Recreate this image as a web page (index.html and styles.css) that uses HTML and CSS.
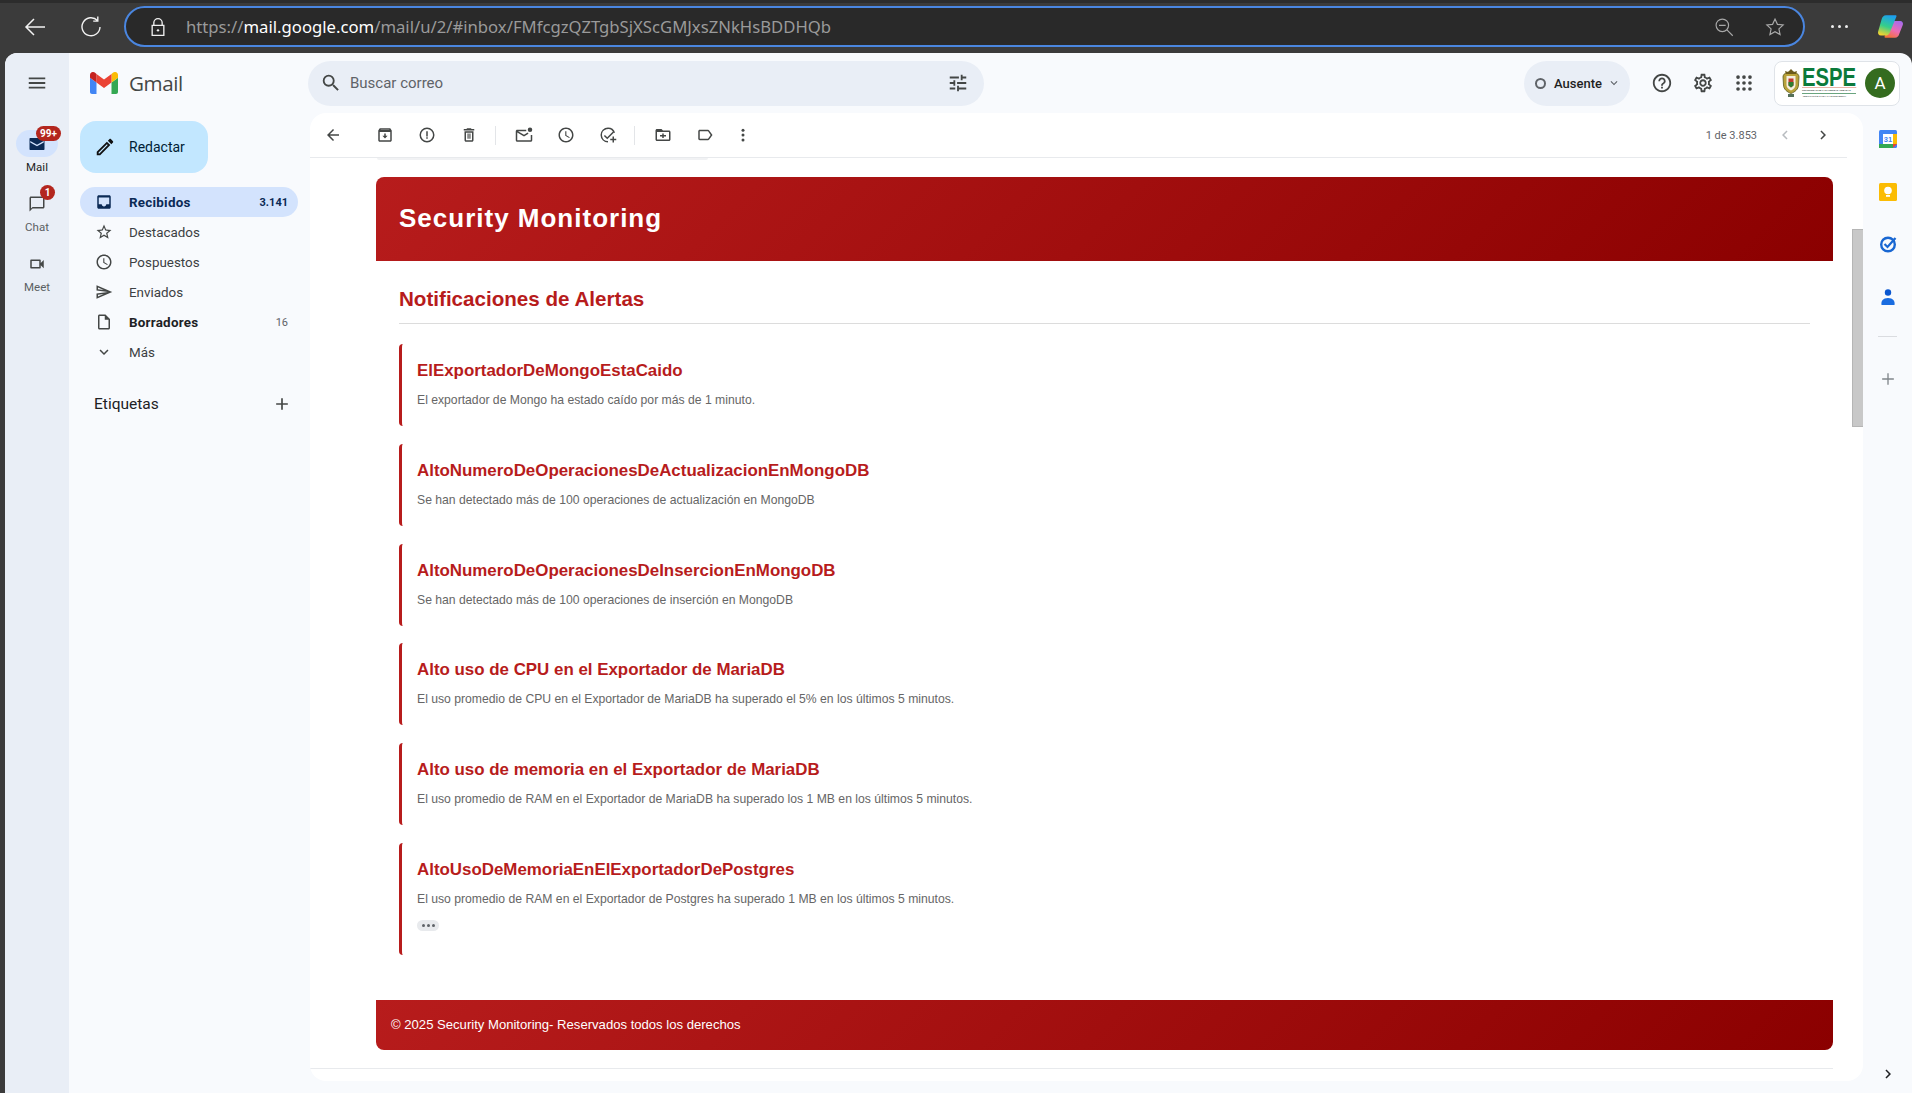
FILE: index.html
```html
<!DOCTYPE html>
<html lang="es">
<head>
  <meta charset="UTF-8">
  <meta name="viewport" content="width=device-width, initial-scale=1.0">
  <title>Security Monitoring - Gmail</title>
  <link rel="stylesheet" href="styles.css">
</head>
<body>
  <!-- browser chrome -->
  <div class="browser-bar">
    <svg class="chrome-icon back" viewBox="0 0 24 24"><path d="M22 12H3M11 4l-8 8 8 8" fill="none" stroke="#f2f2f2" stroke-width="1.5"/></svg>
    <svg class="chrome-icon reload" viewBox="0 0 24 24"><path d="M18.5 5.5A9 9 0 1 0 21 12M18.8 1.5v4.6h-4.6" fill="none" stroke="#f2f2f2" stroke-width="1.4"/></svg>
    <div class="url-pill">
      <svg class="lock" viewBox="0 0 24 24"><path d="M7 10V7a5 5 0 0 1 10 0v3M5 10h14v12H5z" fill="none" stroke="#f0f0f0" stroke-width="1.6"/><circle cx="12" cy="16" r="1.4" fill="#f0f0f0"/></svg>
      <div class="url-text">https://<b>mail.google.com</b>/mail/u/2/#inbox/FMfcgzQZTgbSjXScGMJxsZNkHsBDDHQb</div>
      <svg class="pill-icon zoom-out" viewBox="0 0 24 24"><circle cx="10" cy="10" r="7.5" fill="none" stroke="#a8a8a8" stroke-width="1.4"/><path d="M6 10h8M15.5 15.5l7 7" stroke="#a8a8a8" stroke-width="1.4"/></svg>
      <svg class="pill-icon" viewBox="0 0 24 24"><path d="M12 2.5l2.9 6.3 6.9.8-5.1 4.7 1.4 6.8-6.100-3.400-6.100 3.400 1.400-6.800-5.100-4.700 6.900-.8z" fill="none" stroke="#a8a8a8" stroke-width="1.4"/></svg>
    </div>
    <div class="chrome-dots"><i></i><i></i><i></i></div>
    <svg class="copilot" viewBox="0 0 24 24">
      <defs>
        <linearGradient id="cp1" x1="0.6" y1="0" x2="0.3" y2="1"><stop offset="0" stop-color="#1c9fee"/><stop offset=".55" stop-color="#35cf8a"/><stop offset="1" stop-color="#f4d22f"/></linearGradient>
        <linearGradient id="cp2" x1="0.8" y1="0" x2="0.3" y2="1"><stop offset="0" stop-color="#a56bee"/><stop offset=".55" stop-color="#ec6cb4"/><stop offset="1" stop-color="#f4703a"/></linearGradient>
      </defs>
      <path d="M15 7h5.500c2 0 3 1.500 2.500 3.500L20 18c-.6 2.500-2 4-4 4H7.500c-.8 0-1-.6-.7-1.300L12.500 10c.5-1.800 1-3 2.500-3z" fill="url(#cp2)"/>
      <path d="M8 2h8.500c.8 0 1 .6.7 1.300L11.500 17c-.7 1.800-2 3-4 3H3.500C1.500 20 .5 18.500 1 16.500L4 6c.6-2.500 2-4 4-4z" fill="url(#cp1)"/>
    </svg>
  </div>

  <div class="gmail">
    <!-- rail -->
    <nav class="rail">
      <div class="rail-menu">
        <svg class="icon" viewBox="0 0 24 24"><path d="M3 18h18v-2H3v2zm0-5h18v-2H3v2zm0-7v2h18V6H3z"/></svg>
      </div>
      <div class="rail-item active">
        <div class="rail-pill">
          <svg class="icon-sm navy" viewBox="0 0 24 24"><path d="M3 4h18c.6 0 1 .4 1 1v14c0 .6-.4 1-1 1H3c-.6 0-1-.4-1-1V5c0-.6.4-1 1-1zm0 4v2l9 5 9-5V8l-9 5z"/></svg>
          <span class="badge badge-wide">99+</span>
        </div>
        <span>Mail</span>
      </div>
      <div class="rail-item">
        <div class="rail-pill">
          <svg class="icon-sm" viewBox="0 0 24 24"><path d="M20 2H4c-1.100 0-2 .9-2 2v18l4-4h14c1.100 0 2-.9 2-2V4c0-1.100-.9-2-2-2zm0 14H6l-2 2V4h16v12z"/></svg>
          <span class="badge badge-round">1</span>
        </div>
        <span>Chat</span>
      </div>
      <div class="rail-item">
        <div class="rail-pill">
          <svg class="icon-sm" viewBox="0 0 24 24"><path d="M15 8v8H5V8h10m1-2H4c-.55 0-1 .45-1 1v10c0 .55.45 1 1 1h12c.55 0 1-.45 1-1v-3.500l4 4v-11l-4 4V7c0-.55-.45-1-1-1z"/></svg>
        </div>
        <span>Meet</span>
      </div>
    </nav>

    <div class="workspace">
      <!-- top header -->
      <header class="topbar">
        <div class="brand">
          <svg class="gmail-logo" viewBox="0 0 28 22">
            <path d="M2 22h4.500V10.500L0 5.700V20c0 1.100.9 2 2 2z" fill="#4285f4"/>
            <path d="M21.500 22H26c1.100 0 2-.9 2-2V5.700l-6.500 4.800z" fill="#34a853"/>
            <path d="M21.500 2v8.500L28 5.700V3c0-2.500-2.800-3.900-4.800-2.400z" fill="#fbbc04"/>
            <path d="M6.500 10.500V2L14 7.600 21.500 2v8.500L14 16z" fill="#ea4335"/>
            <path d="M0 3v2.700l6.500 4.800V2L4.800.6C2.800-.9 0 .5 0 3z" fill="#c5221f"/>
          </svg>
          <span class="brand-name">Gmail</span>
        </div>
        <div class="search">
          <svg class="icon" viewBox="0 0 24 24"><path d="M15.500 14h-.79l-.28-.27A6.471 6.471 0 0 0 16 9.500 6.500 6.500 0 1 0 9.500 16c1.610 0 3.090-.59 4.230-1.570l.27.28v.79l5 4.990L20.490 19l-4.990-5zm-6 0C7.010 14 5 11.990 5 9.500S7.010 5 9.500 5 14 7.010 14 9.500 11.990 14 9.500 14z"/></svg>
          <span class="search-text">Buscar correo</span>
          <svg class="icon" viewBox="0 0 24 24"><path d="M3 17v2h6v-2H3zM3 5v2h10V5H3zm10 16v-2h8v-2h-8v-2h-2v6h2zM7 9v2H3v2h4v2h2V9H7zm14 4v-2H11v2h10zm-6-4h2V7h4V5h-4V3h-2v6z"/></svg>
        </div>
        <div class="status">
          <i class="status-dot"></i>
          <span>Ausente</span>
          <svg class="status-caret" viewBox="0 0 24 24"><path d="M16.590 8.590L12 13.170 7.410 8.590 6 10l6 6 6-6z"/></svg>
        </div>
        <div class="top-icons">
          <svg class="icon" viewBox="0 0 24 24"><path d="M11 18h2v-2h-2v2zm1-16C6.480 2 2 6.480 2 12s4.480 10 10 10 10-4.480 10-10S17.520 2 12 2zm0 18c-4.410 0-8-3.590-8-8s3.590-8 8-8 8 3.590 8 8-3.590 8-8 8zm0-14c-2.210 0-4 1.790-4 4h2c0-1.100.9-2 2-2s2 .9 2 2c0 2-3 1.750-3 5h2c0-2.250 3-2.500 3-5 0-2.210-1.790-4-4-4z"/></svg>
          <svg class="icon" viewBox="0 0 24 24"><path d="M19.430 12.980c.04-.32.07-.64.07-.98 0-.34-.03-.66-.07-.98l2.110-1.650c.19-.15.24-.42.12-.64l-2-3.460c-.09-.16-.26-.25-.44-.25-.06 0-.12.01-.17.03l-2.490 1c-.52-.4-1.080-.73-1.690-.98l-.38-2.650C14.460 2.180 14.250 2 14 2h-4c-.25 0-.46.18-.49.42l-.38 2.650c-.61.25-1.170.59-1.690.98l-2.490-1c-.06-.02-.12-.03-.18-.03-.17 0-.34.09-.43.25l-2 3.460c-.13.22-.07.49.12.64l2.110 1.650c-.04.32-.07.65-.07.98 0 .33.03.66.07.98l-2.110 1.650c-.19.15-.24.42-.12.64l2 3.460c.09.16.26.25.44.25.06 0 .12-.01.17-.03l2.490-1c.52.4 1.080.73 1.690.98l.38 2.650c.03.24.24.42.49.42h4c.25 0 .46-.18.49-.42l.38-2.650c.61-.25 1.170-.59 1.690-.98l2.490 1c.06.02.12.03.18.03.17 0 .34-.09.43-.25l2-3.460c.12-.22.07-.49-.12-.64l-2.110-1.650zm-1.980-1.710c.04.31.05.52.05.73 0 .21-.02.43-.05.73l-.14 1.130.89.7 1.080.84-.7 1.210-1.270-.51-1.040-.42-.9.68c-.43.32-.84.56-1.250.73l-1.060.43-.16 1.130-.2 1.350h-1.400l-.19-1.350-.16-1.130-1.060-.43c-.43-.18-.83-.41-1.230-.71l-.91-.7-1.060.43-1.270.51-.7-1.210 1.080-.84.89-.7-.14-1.130c-.03-.31-.05-.54-.05-.74s.02-.43.05-.73l.14-1.130-.89-.7-1.080-.84.7-1.210 1.270.51 1.040.42.9-.68c.43-.32.84-.56 1.250-.73l1.060-.43.16-1.130.2-1.350h1.390l.19 1.350.16 1.130 1.060.43c.43.18.83.41 1.230.71l.91.7 1.060-.43 1.270-.51.7 1.210-1.070.85-.89.7.14 1.130zM12 8c-2.210 0-4 1.790-4 4s1.790 4 4 4 4-1.790 4-4-1.790-4-4-4zm0 6c-1.100 0-2-.9-2-2s.9-2 2-2 2 .9 2 2-.9 2-2 2z"/></svg>
          <svg class="icon" viewBox="0 0 24 24"><circle cx="5.500" cy="5.500" r="2"/><circle cx="12" cy="5.500" r="2"/><circle cx="18.500" cy="5.500" r="2"/><circle cx="5.500" cy="12" r="2"/><circle cx="12" cy="12" r="2"/><circle cx="18.500" cy="12" r="2"/><circle cx="5.500" cy="18.500" r="2"/><circle cx="12" cy="18.500" r="2"/><circle cx="18.500" cy="18.500" r="2"/></svg>
        </div>
        <div class="account">
          <svg class="crest" viewBox="0 0 18 30">
            <path d="M1 9c0-3 3-5 8-5s8 2 8 5l-.5 8c0 4-3.500 7-7.500 8.500C5 24 1.500 21 1.500 17z" fill="#b9a23a" stroke="#5b5a1e" stroke-width=".8"/>
            <path d="M4.500 8h9v9c0 2.500-2 4.500-4.500 5.500C6.500 21.500 4.500 19.500 4.500 17z" fill="#f4efe0"/>
            <path d="M6.500 10.500h5v7l-2.500 2-2.500-2z" fill="#c0392b"/>
            <path d="M6.500 14h5v3.500l-2.500 2-2.500-2z" fill="#2e7d32"/>
            <path d="M3 3l3 1 3-3 3 3 3-1-1 3H4z" fill="#6b5a1a"/>
            <path d="M6 26h6v3H6z" fill="#55705a"/>
          </svg>
          <div class="espe">
            <div class="espe-name">ESPE</div>
            <div class="espe-line">UNIVERSIDAD DE LAS FUERZAS ARMADAS</div>
            <div class="espe-line espe-motto">INNOVACIÓN PARA LA EXCELENCIA</div>
          </div>
          <div class="avatar">A</div>
        </div>
      </header>

      <div class="content-row">
        <!-- sidebar -->
        <aside class="sidebar">
          <div class="compose">
            <svg class="icon compose-icon" viewBox="0 0 24 24"><path d="M3 17.250V21h3.750L17.810 9.940l-3.750-3.750L3 17.250zM5.920 19H5v-.92l9.060-9.060.92.92L5.920 19zM20.710 5.630l-2.340-2.340c-.39-.39-1.020-.39-1.410 0l-1.830 1.830 3.750 3.750 1.830-1.830c.39-.39.39-1.020 0-1.410z"/></svg>
            <span>Redactar</span>
          </div>
          <ul class="nav">
            <li class="nav-row selected">
              <svg class="icon-sm navy" viewBox="0 0 24 24"><path d="M5 3h14c1.100 0 2 .9 2 2v14c0 1.100-.9 2-2 2H5c-1.100 0-2-.9-2-2V5c0-1.100.9-2 2-2zm0 12h4c0 1.660 1.350 3 3 3s3-1.340 3-3h4V6H5z"/></svg>
              <span class="nav-label">Recibidos</span><span class="nav-count">3.141</span>
            </li>
            <li class="nav-row">
              <svg class="icon-sm" viewBox="0 0 24 24"><path d="M22 9.240l-7.190-.62L12 2 9.190 8.630 2 9.240l5.460 4.730L5.820 21 12 17.270 18.180 21l-1.630-7.030L22 9.240zM12 15.400l-3.760 2.270 1-4.280-3.320-2.880 4.380-.38L12 6.100l1.710 4.040 4.380.38-3.320 2.880 1 4.280L12 15.400z"/></svg>
              <span class="nav-label">Destacados</span>
            </li>
            <li class="nav-row">
              <svg class="icon-sm" viewBox="0 0 24 24"><path d="M11.990 2C6.470 2 2 6.480 2 12s4.470 10 9.990 10C17.520 22 22 17.520 22 12S17.520 2 11.990 2zM12 20c-4.420 0-8-3.580-8-8s3.580-8 8-8 8 3.580 8 8-3.580 8-8 8zm.5-13H11v6l5.250 3.150.75-1.230-4.500-2.670z"/></svg>
              <span class="nav-label">Pospuestos</span>
            </li>
            <li class="nav-row">
              <svg class="icon-sm" viewBox="0 0 24 24"><path d="M4.010 6.030l7.510 3.220-7.520-1 .01-2.220m7.500 8.720L4 17.970v-2.220l7.510-1M2.010 3L2 10l15 2-15 2 .01 7L23 12 2.010 3z"/></svg>
              <span class="nav-label">Enviados</span>
            </li>
            <li class="nav-row strong">
              <svg class="icon-sm" viewBox="0 0 24 24"><path d="M14 2H6c-1.100 0-2 .9-2 2v16c0 1.100.9 2 2 2h12c1.100 0 2-.9 2-2V8l-6-6zM6 20V4h7v5h5v11H6z"/></svg>
              <span class="nav-label">Borradores</span><span class="nav-count light">16</span>
            </li>
            <li class="nav-row">
              <svg class="icon-sm" viewBox="0 0 24 24"><path d="M16.590 8.590L12 13.170 7.410 8.590 6 10l6 6 6-6z"/></svg>
              <span class="nav-label">Más</span>
            </li>
          </ul>
          <div class="labels-head">
            <span>Etiquetas</span>
            <svg class="icon" viewBox="0 0 24 24"><path d="M19 13h-6v6h-2v-6H5v-2h6V5h2v6h6v2z"/></svg>
          </div>
        </aside>

        <!-- mail panel -->
        <main class="panel">
          <div class="mail-toolbar">
            <svg class="tool first" viewBox="0 0 24 24"><path d="M20 11H7.830l5.590-5.590L12 4l-8 8 8 8 1.410-1.410L7.830 13H20v-2z"/></svg>
            <div class="tool-group">
              <svg class="tool" viewBox="0 0 24 24"><path d="M5 3h14l2 3v13c0 1.100-.9 2-2 2H5c-1.100 0-2-.9-2-2V6zm0 5v11h14V8zm1-3h12l-.5-.5H6.500zM11 10h2v3h2.500L12 16.800 8.500 13H11z"/></svg>
              <svg class="tool" viewBox="0 0 24 24"><path d="M12 2a10 10 0 1 0 0 20 10 10 0 0 0 0-20zm0 18a8 8 0 1 1 0-16 8 8 0 0 1 0 16zm-1-13h2v7h-2zm0 8h2v2h-2z"/></svg>
              <svg class="tool" viewBox="0 0 24 24"><path d="M16 9v10H8V9h8m-1.500-6h-5l-1 1H5v2h14V4h-3.500l-1-1zM18 7H6v12c0 1.100.9 2 2 2h8c1.100 0 2-.9 2-2V7zM10 10h1.500v7H10zm2.500 0H14v7h-1.500z"/></svg>
            </div>
            <i class="tool-sep"></i>
            <div class="tool-group">
              <svg class="tool" viewBox="0 0 24 24"><path d="M15 5H3c-1.100 0-2 .9-2 2v12c0 1.100.9 2 2 2h18c1.100 0 2-.9 2-2v-7h-2v7H3V8.500l9 5.500 6-3.700-1.100-1.700L12 11.600 4 7h11z"/><circle cx="20" cy="5" r="3"/></svg>
              <svg class="tool" viewBox="0 0 24 24"><path d="M11.990 2C6.470 2 2 6.480 2 12s4.470 10 9.990 10C17.520 22 22 17.520 22 12S17.520 2 11.990 2zM12 20c-4.420 0-8-3.580-8-8s3.580-8 8-8 8 3.580 8 8-3.580 8-8 8zm.5-13H11v6l5.250 3.150.75-1.230-4.500-2.670z"/></svg>
              <svg class="tool" viewBox="0 0 24 24"><path d="M12 2a10 10 0 0 1 9.500 7h-2.100A8 8 0 1 0 12 20v2a10 10 0 0 1 0-20zm6.600 5.400L20 8.800l-9 9-4.500-4.500 1.400-1.400 3.100 3.100zM18 14h2v3h3v2h-3v3h-2v-3h-3v-2h3z"/></svg>
            </div>
            <i class="tool-sep"></i>
            <div class="tool-group">
              <svg class="tool" viewBox="0 0 24 24"><path d="M20 6h-8l-2-2H4c-1.100 0-2 .9-2 2v12c0 1.100.9 2 2 2h16c1.100 0 2-.9 2-2V8c0-1.100-.9-2-2-2zm0 12H4V8h16v10zM11 10h2v2h3v2h-3v2h-2v-2H8v-2h3z"/></svg>
              <svg class="tool" viewBox="0 0 24 24"><path d="M17.630 5.840C17.270 5.330 16.670 5 16 5L5 5.010C3.900 5.010 3 5.900 3 7v10c0 1.100.9 1.990 2 1.990L16 19c.67 0 1.270-.33 1.630-.84L22 12l-4.370-6.160zM16 17H5V7h11l3.550 5L16 17z"/></svg>
              <svg class="tool more" viewBox="0 0 24 24"><circle cx="12" cy="5.500" r="2"/><circle cx="12" cy="12" r="2"/><circle cx="12" cy="18.500" r="2"/></svg>
            </div>
            <div class="pager">
              <span>1 de 3.853</span>
              <svg class="pager-btn off" viewBox="0 0 24 24"><path d="M15.410 7.410L14 6l-6 6 6 6 1.410-1.410L10.830 12z"/></svg>
              <svg class="pager-btn" viewBox="0 0 24 24"><path d="M10 6L8.590 7.410 13.170 12l-4.580 4.590L10 18l6-6z"/></svg>
            </div>
          </div>
          <div class="toolbar-shadow"></div>

          <div class="mail-scroll">
            <div class="mail-view">
              <article class="message">
                <div class="mail-banner">Security Monitoring</div>
                <div class="mail-body">
                  <h2 class="mail-heading">Notificaciones de Alertas</h2>
                  <div class="alert">
                    <h3>ElExportadorDeMongoEstaCaido</h3>
                    <p>El exportador de Mongo ha estado caído por más de 1 minuto.</p>
                  </div>
                  <div class="alert">
                    <h3>AltoNumeroDeOperacionesDeActualizacionEnMongoDB</h3>
                    <p>Se han detectado más de 100 operaciones de actualización en MongoDB</p>
                  </div>
                  <div class="alert">
                    <h3>AltoNumeroDeOperacionesDeInsercionEnMongoDB</h3>
                    <p>Se han detectado más de 100 operaciones de inserción en MongoDB</p>
                  </div>
                  <div class="alert">
                    <h3>Alto uso de CPU en el Exportador de MariaDB</h3>
                    <p>El uso promedio de CPU en el Exportador de MariaDB ha superado el 5% en los últimos 5 minutos.</p>
                  </div>
                  <div class="alert">
                    <h3>Alto uso de memoria en el Exportador de MariaDB</h3>
                    <p>El uso promedio de RAM en el Exportador de MariaDB ha superado los 1 MB en los últimos 5 minutos.</p>
                  </div>
                  <div class="alert last">
                    <h3>AltoUsoDeMemoriaEnElExportadorDePostgres</h3>
                    <p>El uso promedio de RAM en el Exportador de Postgres ha superado 1 MB en los últimos 5 minutos.</p>
                    <div class="trim-chip"><i></i><i></i><i></i></div>
                  </div>
                </div>
                <div class="mail-footer">© 2025 Security Monitoring- Reservados todos los derechos</div>
              </article>
              <div class="mail-end"></div>
            </div>
            <div class="scroll-track"><div class="scroll-thumb"></div></div>
          </div>
        </main>

        <!-- side apps -->
        <aside class="side-apps">
          <svg class="app" viewBox="0 0 18 18">
            <rect width="18" height="18" rx="1.500" fill="#4285f4"/>
            <rect x="4" y="4" width="10" height="10" fill="#fff"/>
            <rect x="14" y="4" width="4" height="10" fill="#fbbc04"/>
            <rect x="0" y="14" width="14" height="4" fill="#34a853"/>
            <path d="M14 14h4l-4 4z" fill="#ea4335"/>
            <text x="9" y="12" class="cal-day" text-anchor="middle">31</text>
          </svg>
          <svg class="app" viewBox="0 0 18 18">
            <rect width="18" height="18" rx="1.500" fill="#fbbc04"/>
            <circle cx="9" cy="7.500" r="3.800" fill="#fff"/>
            <rect x="7" y="12" width="4" height="1.800" fill="#fff"/>
          </svg>
          <svg class="app" viewBox="0 0 18 18">
            <circle cx="9" cy="9.500" r="6.800" fill="none" stroke="#1967d2" stroke-width="2.400"/>
            <path d="M5.500 9l3 3 8-9" fill="none" stroke="#1967d2" stroke-width="2.200"/>
          </svg>
          <svg class="app" viewBox="0 0 18 18">
            <circle cx="9" cy="4.500" r="3.200" fill="#0b57d0"/>
            <path d="M2.500 17c-.7-4 1.500-7 6.500-7s7.200 3 6.500 7z" fill="#1a6ce0"/>
          </svg>
          <i class="apps-sep"></i>
          <svg class="app-add" viewBox="0 0 24 24"><path d="M19 12.800h-6.200V19h-1.600v-6.200H5v-1.600h6.200V5h1.600v6.200H19z"/></svg>
          <svg class="app-toggle" viewBox="0 0 24 24"><path d="M10 6L8.590 7.410 13.170 12l-4.580 4.590L10 18l6-6z"/></svg>
        </aside>
      </div>
    </div>
  </div>
</body>
</html>
```

FILE: styles.css
```css
* {
  box-sizing: border-box;
}
html, body {
  height: 100%;
}
body {
  margin: 0;
  overflow: hidden;
  background-color: #3b3b3b;
  font-family: Roboto, "Liberation Sans", sans-serif;
  color: #1f1f1f;
  display: flex;
  flex-direction: column;
}
svg {
  display: block;
  flex: none;
}

/* browser chrome */
.browser-bar {
  height: 53px;
  flex: none;
  display: flex;
  align-items: center;
  border-top: 3px solid #2c2c2c;
  padding-bottom: 3px;
}
.chrome-icon {
  width: 24px;
  height: 24px;
}
.back {
  margin-left: 23px;
}
.reload {
  margin-left: 32px;
}
.url-pill {
  width: 1681px;
  height: 41px;
  margin-left: 21px;
  display: flex;
  align-items: center;
  background: #292929;
  border: 2px solid #4a86e0;
  border-radius: 21px;
  padding-left: 22px;
}
.lock {
  width: 20px;
  height: 20px;
}
.url-text {
  margin-left: 18px;
  font: 16.7px "Noto Sans", sans-serif;
  color: #9a9a9a;
  flex: 1;
  white-space: nowrap;
}
.url-text b {
  font-weight: 400;
  color: #fff;
}
.pill-icon {
  width: 20px;
  height: 20px;
  margin-right: 18px;
}
.zoom-out {
  margin-right: 31px;
}
.chrome-dots {
  display: flex;
  gap: 4px;
  margin-left: 26px;
}
.chrome-dots i {
  width: 3px;
  height: 3px;
  background: #eee;
  border-radius: 50%;
}
.copilot {
  width: 27px;
  height: 27px;
  margin-left: 29px;
}

/* gmail frame */
.gmail {
  flex: 1;
  min-height: 0;
  margin-left: 5px;
  display: flex;
  background: #f8fafd;
  border-radius: 12px 12px 0 0;
  overflow: hidden;
}
.rail {
  width: 64px;
  flex: none;
  background: #e9eef6;
  display: flex;
  flex-direction: column;
  align-items: center;
}
.rail-menu {
  height: 60px;
  display: flex;
  align-items: center;
  margin-bottom: 17px;
}
.icon {
  width: 22px;
  height: 22px;
  fill: #444746;
}
.icon-sm {
  width: 18px;
  height: 18px;
  fill: #444746;
}
.navy {
  fill: #0b2a55;
}
.rail-item {
  width: 64px;
  height: 60px;
  display: flex;
  flex-direction: column;
  align-items: center;
  font-size: 11.5px;
  color: #5b5f63;
}
.rail-item.active {
  color: #1f1f1f;
}
.rail-pill {
  position: relative;
  width: 42px;
  height: 27px;
  border-radius: 14px;
  margin-bottom: 3px;
  display: flex;
  align-items: center;
  justify-content: center;
}
.rail-item.active .rail-pill {
  background: #d3e3fd;
}
.badge {
  position: absolute;
  background: #b3261e;
  color: #fff;
  font-size: 10px;
  font-weight: 700;
  line-height: 15px;
  height: 15px;
  text-align: center;
  border-radius: 8px;
}
.badge-wide {
  width: 25px;
  top: -4px;
  left: 20px;
}
.badge-round {
  width: 15px;
  top: -5px;
  left: 24px;
}

.workspace {
  flex: 1;
  min-width: 0;
  display: flex;
  flex-direction: column;
}

/* top header */
.topbar {
  height: 60px;
  flex: none;
  display: flex;
  align-items: center;
}
.brand {
  width: 239px;
  flex: none;
  display: flex;
  align-items: center;
  padding-left: 21px;
}
.gmail-logo {
  width: 28px;
  height: 22px;
}
.brand-name {
  margin: 0 0 0 11px;
  font: 20.6px "Open Sans", sans-serif;
  letter-spacing: -.4px;
  color: #444746;
}
.search {
  width: 676px;
  height: 45px;
  flex: none;
  display: flex;
  align-items: center;
  background: #e9eef6;
  border-radius: 23px;
  padding: 0 15px 0 12px;
}
.search-text {
  flex: 1;
  margin-left: 8px;
  font-size: 15px;
  color: #5f6368;
}
.status {
  width: 106px;
  height: 45px;
  margin-left: 540px;
  flex: none;
  display: flex;
  align-items: center;
  background: #e9eef6;
  border-radius: 23px;
  padding-left: 11px;
  font-size: 13px;
  font-weight: 500;
}
.status-dot {
  width: 11px;
  height: 11px;
  border: 2px solid #5f6368;
  border-radius: 50%;
  margin-right: 8px;
}
.status-caret {
  width: 14px;
  height: 14px;
  margin-left: 5px;
  fill: #5f6368;
}
.top-icons {
  display: flex;
  gap: 19px;
  margin-left: 21px;
}
.account {
  width: 126px;
  height: 45px;
  margin-left: 19px;
  flex: none;
  display: flex;
  align-items: center;
  background: #fff;
  border: 1px solid #dfe3e8;
  border-radius: 8px;
  padding-left: 7px;
}
.crest {
  width: 18px;
  height: 30px;
}
.espe {
  width: 54px;
  margin-left: 2px;
}
.espe-name {
  font: 700 25px/20px "Liberation Sans", sans-serif;
  width: 67px;
  height: 21px;
  transform: scaleX(.81);
  transform-origin: left;
  color: #0b7a3b;
  border-bottom: 1px solid #e8b4a8;
}
.espe-line {
  font: 700 2.3px/5px "Liberation Sans", sans-serif;
  white-space: nowrap;
  color: #3d4a42;
  border-bottom: 1px solid #6aa57f;
}
.espe-motto {
  border-bottom: 0;
  letter-spacing: .1px;
  padding-left: 1px;
}
.avatar {
  width: 30px;
  height: 30px;
  margin-left: 9px;
  border-radius: 50%;
  background: #356c1f;
  color: #fff;
  font-size: 17px;
  line-height: 30px;
  text-align: center;
}

.content-row {
  flex: 1;
  min-height: 0;
  display: flex;
  padding-bottom: 12px;
}

/* sidebar */
.sidebar {
  width: 241px;
  flex: none;
  padding: 8px 0 0 11px;
}
.compose {
  width: 128px;
  height: 52px;
  display: flex;
  align-items: center;
  background: #c2e7ff;
  border-radius: 16px;
  padding-left: 14px;
  font-size: 14px;
  color: #001d35;
}
.compose-icon {
  fill: #111;
  margin-right: 13px;
}
.nav {
  list-style: none;
  margin: 14px 0 0;
  padding: 0;
  width: 218px;
}
.nav-row {
  height: 30px;
  display: flex;
  align-items: center;
  padding: 0 10px 0 15px;
  font-size: 13.4px;
  color: #3c4043;
  border-radius: 15px;
}
.nav-label {
  margin-left: 16px;
  flex: 1;
}
.nav-row.selected {
  background: #d3e3fd;
  color: #0b2a55;
  font-weight: 700;
  letter-spacing: .25px;
}
.nav-row.strong {
  font-weight: 700;
  letter-spacing: .25px;
  color: #202124;
}
.nav-count {
  font-size: 11px;
  font-weight: 700;
  letter-spacing: 0;
}
.nav-count.light {
  font-weight: 400;
  color: #5f6368;
}
.labels-head {
  width: 218px;
  height: 30px;
  margin-top: 22px;
  display: flex;
  align-items: center;
  justify-content: space-between;
  padding: 0 6px 0 14px;
  font-size: 15.5px;
  color: #202124;
}
.labels-head .icon {
  width: 20px;
  height: 20px;
}

/* mail panel */
.panel {
  width: 1553px;
  flex: none;
  display: flex;
  flex-direction: column;
  background: #fff;
  border-radius: 16px;
  overflow: hidden;
}
.mail-toolbar {
  height: 45px;
  flex: none;
  display: flex;
  align-items: center;
  padding: 0 15px 0 14px;
  margin-right: 16px;
  border-bottom: 1px solid #e8eaed;
}
.tool {
  width: 18px;
  height: 18px;
  fill: #444746;
}
.tool.first {
  margin-right: 34px;
}
.tool.more {
  margin-left: -4px;
}
.tool-group {
  display: flex;
  gap: 24px;
}
.tool-sep {
  width: 1px;
  height: 19px;
  background: #e3e5e8;
  margin: 0 19px 0 17px;
}
.pager {
  margin-left: auto;
  display: flex;
  align-items: center;
  font-size: 11px;
  color: #5f6368;
}
.pager span {
  margin-right: 19px;
}
.pager-btn {
  width: 18px;
  height: 18px;
  fill: #444746;
}
.pager-btn.off {
  fill: #b8bcc0;
  margin-right: 20px;
}
.toolbar-shadow {
  width: 331px;
  height: 2px;
  flex: none;
  margin-left: 67px;
  background: #f1f2f4;
  border-radius: 0 0 6px 6px;
}
.mail-scroll {
  flex: 1;
  min-height: 0;
  display: flex;
}
.mail-view {
  flex: 1;
  min-width: 0;
  padding-top: 17px;
}
.message {
  margin: 0 19px 0 66px;
}
.mail-banner {
  height: 84px;
  padding-left: 23px;
  background: linear-gradient(135deg, #b71c1c, #8b0000);
  border-radius: 8px 8px 0 0;
  color: #fff;
  font: 700 26px/82px "Liberation Sans", sans-serif;
  letter-spacing: 1px;
}
.mail-body {
  padding: 0 23px;
  font-family: "Liberation Sans", sans-serif;
}
.mail-heading {
  margin: 0 0 20px;
  height: 63px;
  padding-top: 20px;
  font-size: 20.6px;
  line-height: 35px;
  color: #b71c1c;
  border-bottom: 1px solid #dcdcdc;
}
.alert {
  height: 82px;
  margin-bottom: 17.8px;
  border-left: 3px solid #b71c1c;
  border-radius: 4px;
  padding: 17px 0 0 15px;
}
.alert.last {
  height: 112px;
  margin-bottom: 45px;
}
.alert h3 {
  margin: 0 0 9px;
  font-size: 16.9px;
  line-height: 20px;
  color: #b71c1c;
}
.alert p {
  margin: 0;
  font-size: 12.2px;
  line-height: 20px;
  color: #666;
}
.trim-chip {
  width: 22px;
  height: 11px;
  margin-top: 11px;
  display: flex;
  align-items: center;
  justify-content: center;
  gap: 2px;
  background: #e8eaed;
  border-radius: 6px;
}
.trim-chip i {
  width: 3px;
  height: 3px;
  background: #5f6368;
  border-radius: 50%;
}
.mail-footer {
  height: 50px;
  padding-left: 15px;
  background: linear-gradient(135deg, #b71c1c, #8b0000);
  border-radius: 0 0 8px 8px;
  color: #fff;
  font: 13.1px/49px "Liberation Sans", sans-serif;
}
.mail-end {
  height: 1px;
  margin: 18px 19px 0 0;
  background: #e8eaed;
}
.scroll-track {
  width: 11px;
  flex: none;
  padding-top: 69px;
}
.scroll-thumb {
  height: 198px;
  background: #c8c8c8;
  border: 1px solid #b5b5b5;
  border-width: 1px 0 1px 1px;
}

/* side apps */
.side-apps {
  flex: 1;
  display: flex;
  flex-direction: column;
  align-items: center;
  padding-top: 17px;
  position: relative;
}
.app {
  width: 18px;
  height: 18px;
  margin-bottom: 34.7px;
}
.cal-day {
  font: 700 7.5px "Liberation Sans", sans-serif;
  fill: #4285f4;
}
.apps-sep {
  width: 19px;
  height: 1px;
  margin-top: -5px;
  background: #dadce0;
}
.app-add {
  width: 20px;
  height: 20px;
  margin-top: 32px;
  fill: #80868b;
}
.app-toggle {
  position: absolute;
  bottom: -2px;
  width: 18px;
  height: 18px;
  fill: #202124;
}
```
